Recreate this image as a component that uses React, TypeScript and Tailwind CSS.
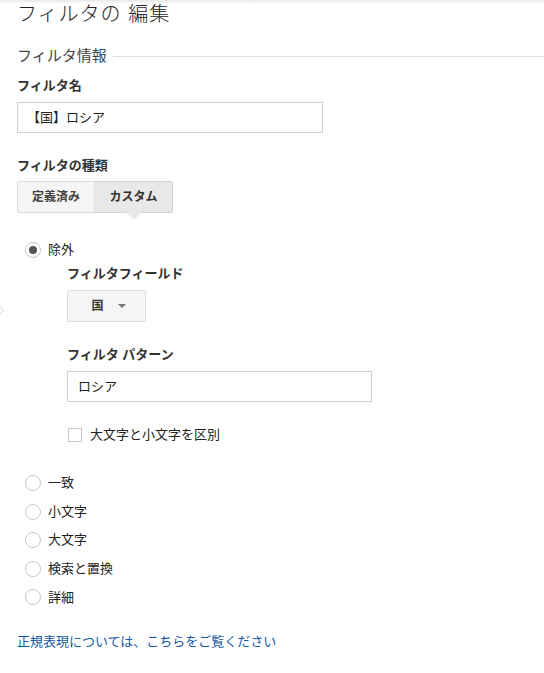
const font = { fontFamily: '"Liberation Sans", "Noto Sans CJK JP", sans-serif' };

const others = ["一致", "小文字", "大文字", "検索と置換", "詳細"];

function Radio({ checked }: { checked?: boolean }) {
  return (
    <span className="flex h-[16px] w-[16px] shrink-0 items-center justify-center rounded-full border border-[#c8c8c8] bg-white">
      {checked && <span className="h-[8px] w-[8px] rounded-full bg-[#555]" />}
    </span>
  );
}

export default function App() {
  return (
    <div className="relative h-[673px] w-[544px] overflow-hidden bg-white text-[13px] text-[#222]" style={font}>
      {/* top shadow */}
      <div className="absolute left-0 right-0 top-0 h-[4px] bg-gradient-to-b from-[#e8e8e8] to-white" />
      {/* faint marker at left edge */}
      <div className="absolute left-[-4px] top-[307px] h-[7px] w-[7px] rotate-45 border border-[#e2e2e2] bg-white" />

      <div className="px-[17px]">
        <h1 className="pt-[1px] text-[20px] font-light leading-[26px] tracking-[1px] text-[#222]">フィルタの 編集</h1>

        <div className="mt-[19px] flex items-center gap-[6px]">
          <span className="text-[15px] leading-[20px] text-[#444]">フィルタ情報</span>
          <div className="mr-[-17px] h-px flex-1 bg-[#e0e0e0]" />
        </div>

        <div className="mt-[11px] font-bold leading-[18px] text-[#333]">フィルタ名</div>
        <div className="mt-[7px] flex h-[31px] w-[306px] items-center border border-[#d0d0d0] px-[9px]">【国】ロシア</div>

        <div className="mt-[24px] font-bold leading-[18px] text-[#333]">フィルタの種類</div>
        <div className="relative mt-[6px] flex w-[156px]">
          <div className="flex h-[32px] w-[78px] items-center justify-center rounded-l-[2px] border border-[#dcdcdc] bg-[#f5f5f5] text-[12px] font-bold text-[#444]">
            定義済み
          </div>
          <div className="flex h-[32px] w-[78px] items-center justify-center rounded-r-[2px] border border-l-0 border-[#d0d0d0] bg-[#e8e8e8] text-[12px] font-bold text-[#333]">
            カスタム
          </div>
          <div className="absolute left-[109px] top-[31px] h-0 w-0 border-x-[8px] border-t-[8px] border-x-transparent border-t-[#e8e8e8]" />
        </div>

        <div className="ml-[8px] mt-[28px] flex h-[18px] items-center gap-[7px]">
          <Radio checked />
          <span>除外</span>
        </div>

        <div className="ml-[50px]">
          <div className="mt-[6px] font-bold leading-[18px] text-[#333]">フィルタフィールド</div>
          <div className="mt-[7px] flex h-[32px] w-[79px] items-center justify-center gap-[14px] rounded-[2px] border border-[#dcdcdc] bg-[#f5f5f5] pl-[4px]">
            <span className="text-[12px] font-bold text-[#333]">国</span>
            <span className="h-0 w-0 border-x-[4px] border-t-[4px] border-x-transparent border-t-[#777]" />
          </div>

          <div className="mt-[24px] font-bold leading-[18px] text-[#333]">フィルタ パターン</div>
          <div className="mt-[7px] flex h-[31px] w-[305px] items-center border border-[#d0d0d0] px-[10px]">ロシア</div>

          <div className="mt-[24px] flex h-[18px] items-center gap-[8px]">
            <span className="ml-[1px] h-[14px] w-[14px] border border-[#c8c8c8] bg-white" />
            <span>大文字と小文字を区別</span>
          </div>
        </div>

        <div className="mt-[30px] flex flex-col gap-[10.6px]">
          {others.map((t) => (
            <div key={t} className="ml-[8px] flex h-[18px] items-center gap-[7px]">
              <Radio />
              <span>{t}</span>
            </div>
          ))}
        </div>

        <a className="mt-[27px] block leading-[18px] text-[#1558a6]" href="#">
          正規表現については、こちらをご覧ください
        </a>
      </div>
    </div>
  );
}
